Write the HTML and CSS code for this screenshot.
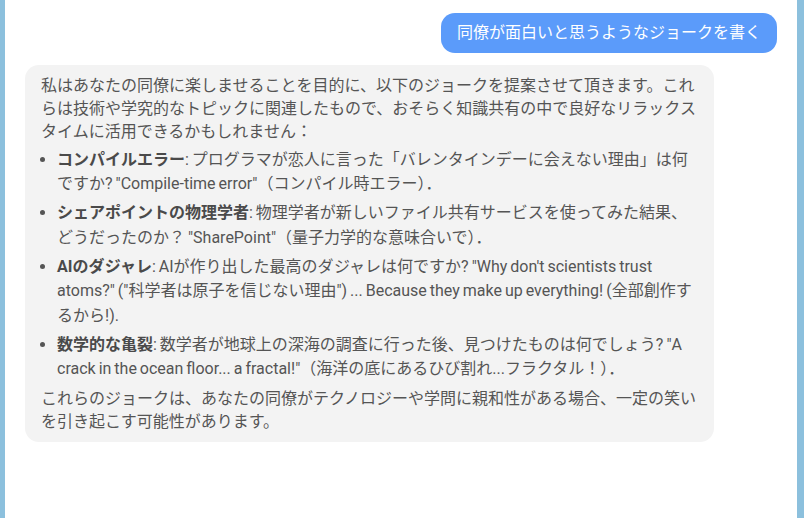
FILE: index.html
```html
<!DOCTYPE html>
<html lang="ja">
    <head>
        <meta charset="UTF-8">
        <title>chat</title>
        <link rel="stylesheet" href="styles.css">
    </head>
    <body>
        <div class="chat">
            <div class="msg user">同僚が面白いと思うようなジョークを書く</div>
            <div class="msg bot">
                <p>私はあなたの同僚に楽しませることを目的に、以下のジョークを提案させて頂きます。これらは技術や学究的なトピックに関連したもので、おそらく知識共有の中で良好なリラックスタイムに活用できるかもしれません：</p>
                <ul>
                    <li><b>コンパイルエラー</b>: プログラマが恋人に言った「バレンタインデーに会えない理由」は何ですか? "Compile-time error"（コンパイル時エラー）．</li>
                    <li><b>シェアポイントの物理学者</b>: 物理学者が新しいファイル共有サービスを使ってみた結果、どうだったのか？ "SharePoint"（量子力学的な意味合いで）．</li>
                    <li><b>AIのダジャレ</b>: AIが作り出した最高のダジャレは何ですか? "Why don't scientists trust atoms?" ("科学者は原子を信じない理由") ... Because they make up everything! (全部創作するから!).</li>
                    <li><b>数学的な亀裂</b>: 数学者が地球上の深海の調査に行った後、見つけたものは何でしょう? "A crack in the ocean floor... a fractal!"（海洋の底にあるひび割れ...フラクタル！）．</li>
                </ul>
                <p>これらのジョークは、あなたの同僚がテクノロジーや学問に親和性がある場合、一定の笑いを引き起こす可能性があります。</p>
            </div>
        </div>
    </body>
</html>
```

FILE: styles.css
```css
html, body {
    height: 100%;
}
body {
    margin: 0;
    box-sizing: border-box;
    border-left: 5px solid #8cc0dd;
    border-right: 7px solid #8cc0dd;
    background: #ffffff;
    font-family: Roboto, "Noto Sans CJK JP", sans-serif;
    font-size: 16px;
    color: #555555;
}
.chat {
    display: flex;
    flex-direction: column;
    gap: 12px;
    padding: 13px 20px;
}
.msg {
    border-radius: 14px;
}
.user {
    align-self: flex-end;
    background-color: #5b9bfa;
    color: #ffffff;
    padding: 8px 16px;
    line-height: 24px;
}
.bot {
    align-self: flex-start;
    max-width: 689px;
    box-sizing: border-box;
    background-color: #f3f3f3;
    padding: 8.5px 16px 9.5px;
}
.bot p {
    margin: 0;
    line-height: 23px;
}
.bot ul {
    margin: 5px 0;
    padding-left: 16px;
}
.bot li {
    line-height: 24.5px;
    word-spacing: -1px;
}
.bot li + li {
    margin-top: 4.5px;
}
.bot b {
    color: #4a4a4a;
}
```
